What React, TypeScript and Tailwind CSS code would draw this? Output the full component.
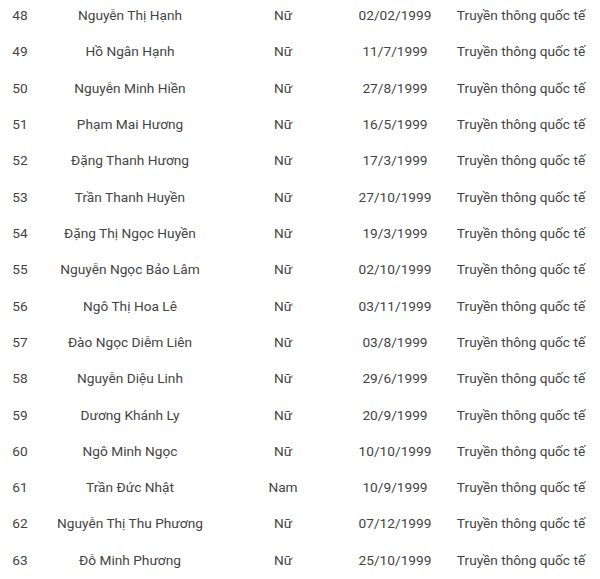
import React from "react";

const rows: [string, string, string, string][] = [
  ["48", "Nguyễn Thị Hạnh", "Nữ", "02/02/1999"],
  ["49", "Hồ Ngân Hạnh", "Nữ", "11/7/1999"],
  ["50", "Nguyễn Minh Hiền", "Nữ", "27/8/1999"],
  ["51", "Phạm Mai Hương", "Nữ", "16/5/1999"],
  ["52", "Đặng Thanh Hương", "Nữ", "17/3/1999"],
  ["53", "Trần Thanh Huyền", "Nữ", "27/10/1999"],
  ["54", "Đặng Thị Ngọc Huyền", "Nữ", "19/3/1999"],
  ["55", "Nguyễn Ngọc Bảo Lâm", "Nữ", "02/10/1999"],
  ["56", "Ngô Thị Hoa Lê", "Nữ", "03/11/1999"],
  ["57", "Đào Ngọc Diễm Liên", "Nữ", "03/8/1999"],
  ["58", "Nguyễn Diệu Linh", "Nữ", "29/6/1999"],
  ["59", "Dương Khánh Ly", "Nữ", "20/9/1999"],
  ["60", "Ngô Minh Ngọc", "Nữ", "10/10/1999"],
  ["61", "Trần Đức Nhật", "Nam", "10/9/1999"],
  ["62", "Nguyễn Thị Thu Phương", "Nữ", "07/12/1999"],
  ["63", "Đỗ Minh Phương", "Nữ", "25/10/1999"],
];

export default function App() {
  return (
    <div
      className="w-[600px] h-[579px] overflow-hidden bg-white text-[#444444] text-[13.7px]"
      style={{ fontFamily: "Roboto, 'Noto Sans', sans-serif" }}
    >
      <div className="-mt-[3px] flex flex-col">
        {rows.map((r) => (
          <div key={r[0]} className="grid grid-cols-[40px_180px_126px_98px_154px] h-[36.33px] items-center">
            <div className="text-center">{r[0]}</div>
            <div className="text-center">{r[1]}</div>
            <div className="text-center">{r[2]}</div>
            <div className="text-center">{r[3]}</div>
            <div className="text-center">Truyền thông quốc tế</div>
          </div>
        ))}
      </div>
    </div>
  );
}
